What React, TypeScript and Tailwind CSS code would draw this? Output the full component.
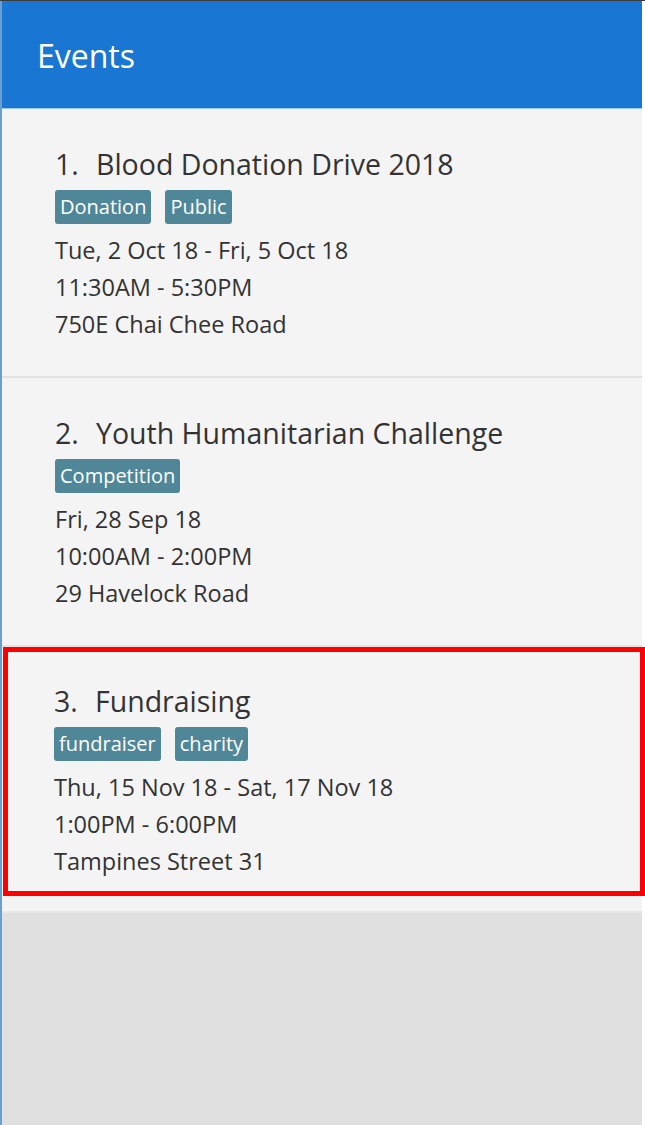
import React from 'react'

interface EventItem {
  name: string
  tags: string[]
  date: string
  time: string
  venue: string
}

const events: EventItem[] = [
  {
    name: 'Blood Donation Drive 2018',
    tags: ['Donation', 'Public'],
    date: 'Tue, 2 Oct 18 - Fri, 5 Oct 18',
    time: '11:30AM - 5:30PM',
    venue: '750E Chai Chee Road',
  },
  {
    name: 'Youth Humanitarian Challenge',
    tags: ['Competition'],
    date: 'Fri, 28 Sep 18',
    time: '10:00AM - 2:00PM',
    venue: '29 Havelock Road',
  },
  {
    name: 'Fundraising',
    tags: ['fundraiser', 'charity'],
    date: 'Thu, 15 Nov 18 - Sat, 17 Nov 18',
    time: '1:00PM - 6:00PM',
    venue: 'Tampines Street 31',
  },
]

const EventBody: React.FC<{ index: number; ev: EventItem }> = ({ index, ev }) => (
  <div className="text-[#333333]">
    <div className="flex h-[34px] items-center text-[28.5px] leading-none">
      <span className="w-[41px]">{index}.</span>
      <span>{ev.name}</span>
    </div>
    <div className="mt-[9px] flex gap-[14px]">
      {ev.tags.map(tag => (
        <span
          key={tag}
          className="flex h-[34px] items-center rounded-[3px] bg-[#4f8799] px-[5px] text-[20px] text-white"
        >
          {tag}
        </span>
      ))}
    </div>
    <div className="mt-[8px] text-[23.5px] leading-[37px]">
      <div>{ev.date}</div>
      <div>{ev.time}</div>
      <div>{ev.venue}</div>
    </div>
  </div>
)

export default function App() {
  return (
    <div
      className="flex h-[1125px] w-[645px] flex-col bg-white"
      style={{ fontFamily: '"Open Sans", "Noto Sans", sans-serif' }}
    >
      <div className="h-px w-full bg-[#3c3c3c]" />
      <div className="flex flex-1 border-l-2 border-l-[#6b9fd2]">
        <div className="flex w-[640px] flex-col bg-[#e0e0e0]">
          <div className="flex h-[108px] items-center border-b border-b-[#9cc8f0] bg-[#1976d2] pl-[35px]">
            <h1 className="mt-[2px] text-[32px] text-white">Events</h1>
          </div>

          {events.slice(0, 2).map((ev, i) => (
            <div
              key={ev.name}
              className="h-[269px] border-b-2 border-b-[#e2e2e2] bg-[#f4f4f4] pl-[53px] pt-[38px]"
            >
              <EventBody index={i + 1} ev={ev} />
            </div>
          ))}

          <div className="h-[266px] border-b-2 border-b-[#e8e8e8] bg-[#f4f4f4] pl-px">
            <div className="-mr-[3px] h-[249px] border-[5px] border-[#ff0000] pl-[46px] pt-[32px]">
              <EventBody index={3} ev={events[2]} />
            </div>
          </div>
        </div>
      </div>
    </div>
  )
}
